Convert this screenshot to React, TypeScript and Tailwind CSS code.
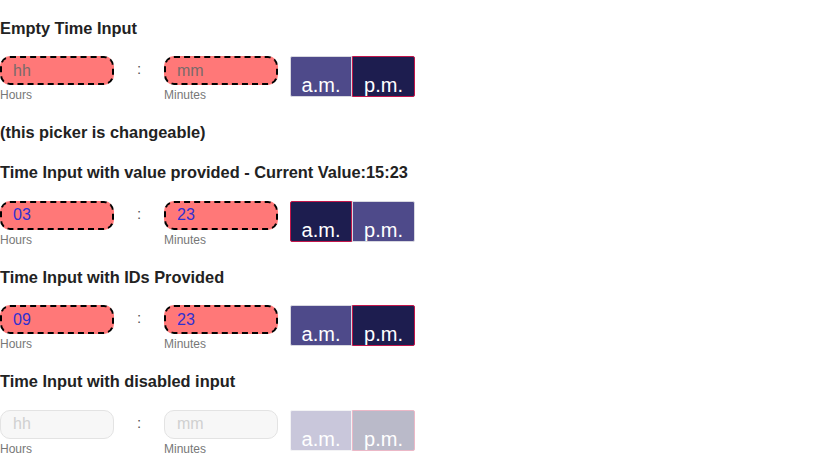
import React from "react";

type RowProps = {
  hours?: string;
  minutes?: string;
  am: boolean;
  disabled?: boolean;
};

function Field({ value, placeholder, label, disabled }: { value?: string; placeholder: string; label: string; disabled?: boolean }) {
  return (
    <div className="flex flex-col w-[114px]">
      {disabled ? (
        <div className="h-[29px] rounded-[10px] border border-[#e3e3e3] bg-[#f7f7f7] pl-[12px] flex items-center text-[16px] text-[#d0d0d0]">
          {placeholder}
        </div>
      ) : (
        <div className="h-[29px] rounded-[10px] border-2 border-dashed border-black bg-[#ff7878] pl-[11px] flex items-center text-[16px]">
          {value ? <span className="text-[#3030d0]">{value}</span> : <span className="text-[#7a6a6a]">{placeholder}</span>}
        </div>
      )}
      <div className="mt-[3px] text-[12px] leading-[14px] text-[#777]">{label}</div>
    </div>
  );
}

function Row({ hours, minutes, am, disabled }: RowProps) {
  const sel = "bg-[#1d1d4f] border border-[#c2164a]";
  const unsel = "bg-[#4e4a8a] border border-[#d8d8e0]";
  return (
    <div className="flex items-start h-[46px]">
      <Field value={hours} placeholder="hh" label="Hours" disabled={disabled} />
      <div className="w-[50px] flex justify-center pt-[4px] text-[15px] leading-[18px] text-[#555]">:</div>
      <Field value={minutes} placeholder="mm" label="Minutes" disabled={disabled} />
      <div className={"ml-[12px] flex " + (disabled ? "opacity-30" : "")}>
        <div className={"w-[62px] h-[41px] rounded-l-[2px] flex items-end justify-center text-[20px] leading-[22px] text-white " + (am ? sel : unsel)}>
          a.m.
        </div>
        <div className={"w-[63px] h-[41px] rounded-r-[2px] flex items-end justify-center text-[20px] leading-[22px] text-white " + (!am ? sel : unsel)}>
          p.m.
        </div>
      </div>
    </div>
  );
}

export default function App() {
  const h = "text-[16.38px] leading-[18px] font-bold";
  return (
    <div className="w-[838px] h-[458px] bg-white overflow-hidden pt-[18.5px] text-[#222]" style={{ fontFamily: '"Liberation Sans", Arial, sans-serif' }}>
      <div className="flex flex-col">
        <h3 className={h + " mb-[19.5px]"}>Empty Time Input</h3>
        <div className="mb-[21px]"><Row am={false} /></div>
        <h3 className={h + " mb-[22px]"}>(this picker is changeable)</h3>
        <h3 className={h + " mb-[19.5px]"}>Time Input with value provided - Current Value:15:23</h3>
        <div className="mb-[21px]"><Row hours="03" minutes="23" am={true} /></div>
        <h3 className={h + " mb-[19.5px]"}>Time Input with IDs Provided</h3>
        <div className="mb-[21px]"><Row hours="09" minutes="23" am={false} /></div>
        <h3 className={h + " mb-[19.5px]"}>Time Input with disabled input</h3>
        <div><Row am={false} disabled /></div>
      </div>
    </div>
  );
}
